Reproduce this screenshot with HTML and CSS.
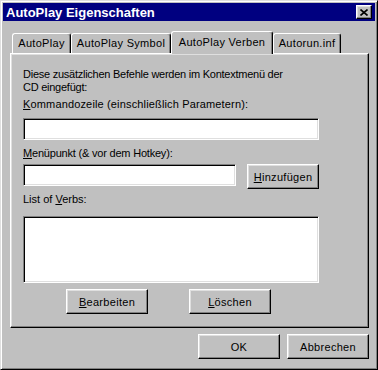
FILE: index.html
```html
<!DOCTYPE html>
<html lang="de">
<head>
    <meta charset="UTF-8">
    <title>AutoPlay Eigenschaften</title>
    <link rel="stylesheet" href="styles.css">
</head>
<body>
    <div class="window">
        <div class="titlebar">
            <span class="title">AutoPlay Eigenschaften</span>
            <span class="close">
                <svg width="8" height="7" viewBox="0 0 8 7"><path d="M0.5 0.5 L7.5 6.5 M7.5 0.5 L0.5 6.5" stroke="#000" stroke-width="1.6" fill="none"/></svg>
            </span>
        </div>
        <div class="content">
            <div class="tabs">
                <div class="tab tab-autoplay">AutoPlay</div>
                <div class="tab tab-symbol">AutoPlay Symbol</div>
                <div class="tab tab-verben active">AutoPlay Verben</div>
                <div class="tab tab-autorun">Autorun.inf</div>
            </div>
            <div class="panel">
                <p class="desc">Diese zusätzlichen Befehle werden im Kontextmenü der<br>CD eingefügt:</p>
                <label class="lbl lbl-cmd"><u>K</u>ommandozeile (einschließlich Parametern):</label>
                <div class="field field-wide"></div>
                <label class="lbl lbl-menu"><u>M</u>enüpunkt (&amp; vor dem Hotkey):</label>
                <div class="row">
                    <div class="field field-short"></div>
                    <button class="btn btn-add"><u>H</u>inzufügen</button>
                </div>
                <label class="lbl lbl-list">List of <u>V</u>erbs:</label>
                <div class="listbox"></div>
                <div class="actions">
                    <button class="btn btn-panel"><u>B</u>earbeiten</button>
                    <button class="btn btn-panel"><u>L</u>öschen</button>
                </div>
            </div>
            <div class="footer">
                <button class="btn btn-dialog">OK</button>
                <button class="btn btn-dialog">Abbrechen</button>
            </div>
        </div>
    </div>
</body>
</html>
```

FILE: styles.css
```css
body {
    margin: 0;
    background-color: #c0c0c0;
    font-family: "Liberation Sans", Arial, sans-serif;
    font-size: 11px;
    line-height: 13px;
    color: #000;
}
.window {
    width: 378px;
    height: 370px;
    box-sizing: border-box;
    padding: 2px;
    background-color: #c0c0c0;
    border: 1px solid;
    border-color: #dfdfdf #000 #000 #dfdfdf;
    box-shadow: inset 1px 1px #fff, inset -1px -1px #808080;
}
.titlebar {
    height: 18px;
    background-color: #000080;
    display: flex;
    align-items: center;
    justify-content: space-between;
    padding: 0 3px;
}
.title {
    color: #fff;
    font-weight: bold;
    font-size: 13px;
}
.close {
    width: 16px;
    height: 14px;
    box-sizing: border-box;
    background-color: #c0c0c0;
    border: 1px solid;
    border-color: #fff #000 #000 #fff;
    box-shadow: inset -1px -1px #808080, inset 1px 1px #dfdfdf;
    display: flex;
    align-items: center;
    justify-content: center;
}
.close svg {
    display: block;
}
.content {
    padding: 10px 6px 0 7px;
}
/* Tabs */
.tabs {
    display: flex;
    align-items: flex-end;
    height: 22px;
    padding-left: 2px;
}
.tab {
    height: 20px;
    box-sizing: border-box;
    border: 1px solid;
    border-color: #fff #000 transparent #fff;
    border-bottom: none;
    border-radius: 3px 3px 0 0;
    box-shadow: inset -1px 0 #808080;
    text-align: center;
    padding-top: 3px;
    white-space: nowrap;
    letter-spacing: 0.3px;
}
.tab-autoplay { width: 59px; }
.tab-symbol { width: 100px; }
.tab-verben { width: 102px; }
.tab-autorun { width: 68px; }
.tab.active {
    height: 23px;
    margin-bottom: -1px;
    padding-top: 4px;
    background-color: #c0c0c0;
    position: relative;
    z-index: 1;
}
/* Panel */
.panel {
    height: 275px;
    box-sizing: border-box;
    border: 1px solid;
    border-color: #fff #000 #000 #fff;
    box-shadow: inset -1px -1px #808080, inset 1px 1px #dfdfdf;
    padding: 14px 0 0 12px;
}
.desc {
    margin: 0;
    letter-spacing: -0.25px;
}
.lbl {
    display: block;
}
.lbl-cmd { margin-top: 4px; letter-spacing: 0.15px; }
.lbl-menu { margin-top: 7px; letter-spacing: -0.2px; }
.lbl-list { margin-top: 4px; }
.field, .listbox {
    box-sizing: border-box;
    background-color: #fff;
    border: 1px solid;
    border-color: #808080 #fff #fff #808080;
    box-shadow: inset 1px 1px #000, inset -1px -1px #dfdfdf;
}
.field {
    height: 22px;
}
.field-wide {
    width: 296px;
    margin-top: 7px;
}
.field-short {
    width: 213px;
}
.row {
    display: flex;
    align-items: flex-start;
    gap: 11px;
    margin-top: 4px;
}
.listbox {
    width: 296px;
    height: 67px;
    margin-top: 10px;
}
.actions {
    display: flex;
    gap: 41px;
    margin: 6px 0 0 43px;
}
.footer {
    display: flex;
    justify-content: flex-end;
    gap: 7px;
    margin-top: 6px;
}
/* Buttons */
.btn {
    height: 25px;
    box-sizing: border-box;
    padding: 0;
    background-color: #c0c0c0;
    border: 1px solid;
    border-color: #fff #000 #000 #fff;
    box-shadow: inset -1px -1px #808080, inset 1px 1px #dfdfdf;
    font-family: inherit;
    font-size: 11px;
    letter-spacing: 0.3px;
    color: #000;
}
.btn-add { width: 72px; }
.btn-panel { width: 82px; }
.btn-dialog { width: 82px; }
```
